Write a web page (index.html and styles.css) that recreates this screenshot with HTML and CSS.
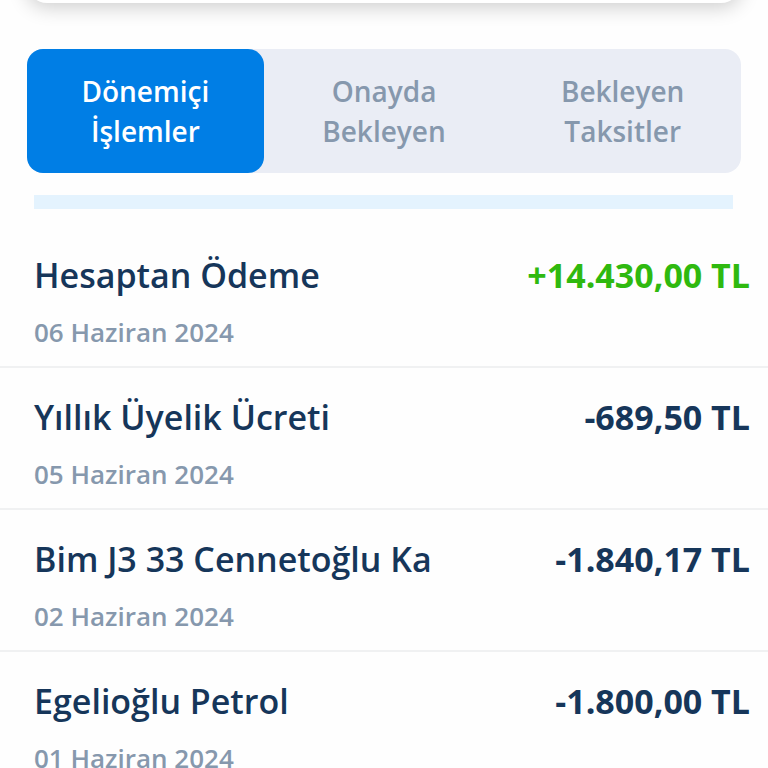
FILE: index.html
```html
<!DOCTYPE html>
<html lang="tr">
<head>
    <meta charset="UTF-8">
    <meta name="viewport" content="width=device-width, initial-scale=1.0">
    <title>Kart Hareketleri</title>
    <link rel="stylesheet" href="styles.css">
</head>
<body>
    <div class="card-bottom"></div>

    <div class="tabs">
        <button type="button" class="tab active">Dönemiçi<br>İşlemler</button>
        <button type="button" class="tab">Onayda<br>Bekleyen</button>
        <button type="button" class="tab">Bekleyen<br>Taksitler</button>
    </div>

    <div class="divider"></div>

    <ul class="transactions">
        <li class="transaction">
            <div class="info">
                <h2>Hesaptan Ödeme</h2>
                <p class="date">06 Haziran 2024</p>
            </div>
            <span class="amount income">+14.430,00 TL</span>
        </li>
        <li class="transaction">
            <div class="info">
                <h2>Yıllık Üyelik Ücreti</h2>
                <p class="date">05 Haziran 2024</p>
            </div>
            <span class="amount">-689,50 TL</span>
        </li>
        <li class="transaction">
            <div class="info">
                <h2>Bim J3 33 Cennetoğlu Ka</h2>
                <p class="date">02 Haziran 2024</p>
            </div>
            <span class="amount">-1.840,17 TL</span>
        </li>
        <li class="transaction">
            <div class="info">
                <h2>Egelioğlu Petrol</h2>
                <p class="date">01 Haziran 2024</p>
            </div>
            <span class="amount">-1.800,00 TL</span>
        </li>
    </ul>
</body>
</html>
```

FILE: styles.css
```css
* {
    box-sizing: border-box;
}

html {
    scrollbar-width: none;
}

body {
    font-family: 'Open Sans', sans-serif;
    background-color: #fefefe;
    color: #16365a;
    margin: 0;
}

/* bottom edge of the card above the tabs */
.card-bottom {
    height: 32px;
    margin: -29px 27px 46px;
    border-radius: 0 0 20px 20px;
    background-color: #ffffff;
    box-shadow: 0 4px 20px rgba(0, 0, 0, 0.2);
}

.tabs {
    display: flex;
    gap: 2px;
    margin: 0 27px;
    background-color: #eaedf5;
    border-radius: 16px;
}

.tab {
    flex: 1;
    padding: 22px 0;
    border: none;
    border-radius: 16px;
    background: none;
    color: #8698ad;
    font-family: inherit;
    font-size: 28px;
    font-weight: 600;
    line-height: 40px;
    cursor: pointer;
}

.tab.active {
    background-color: #007ee5;
    color: #ffffff;
}

.divider {
    height: 14px;
    margin: 22px 35px 0 34px;
    background-color: #e4f3fe;
}

.transactions {
    list-style: none;
    margin: 17px 0 0;
    padding: 0;
}

.transaction {
    display: flex;
    justify-content: space-between;
    align-items: flex-start;
    padding: 25px 18px 16px 34px;
    border-bottom: 2px solid #f0f1f2;
}

.transaction h2 {
    margin: 0;
    font-size: 34px;
    font-weight: 600;
    line-height: 48px;
}

.date {
    margin: 15px 0 0;
    color: #8698ad;
    font-size: 26px;
    font-weight: 600;
    line-height: 36px;
}

.amount {
    font-size: 34px;
    font-weight: 700;
    line-height: 48px;
    white-space: nowrap;
}

.income {
    color: #2fb90f;
}
```
